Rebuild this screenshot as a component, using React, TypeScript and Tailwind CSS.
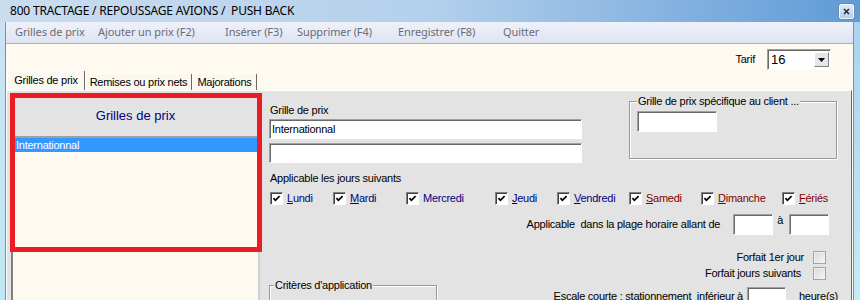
import * as React from "react";

function Check({ on = true }: { on?: boolean }) {
  return (
    <span className="flex h-[13px] w-[13px] shrink-0 items-center justify-center border border-t-[#808080] border-l-[#808080] border-r-white border-b-white bg-white shadow-[inset_1px_1px_0_#404040]">
      {on && (
        <svg width="9" height="9" viewBox="0 0 9 9">
          <path d="M1.4 4.2 3.4 6.3 7.6 2.1" fill="none" stroke="#000" strokeWidth="1.7" />
        </svg>
      )}
    </span>
  );
}

function FlatCheck() {
  return (
    <span className="h-[13px] w-[13px] shrink-0 border border-[#a3a3a3] bg-gradient-to-br from-[#d6d6d6] to-[#f7f7f7] shadow-[inset_1px_1px_0_#f2f2f2]" />
  );
}

function Field({ className = "", children }: { className?: string; children?: React.ReactNode }) {
  return (
    <div
      className={`flex items-center border border-t-[#a0a0a0] border-l-[#a0a0a0] border-r-white border-b-white bg-white pl-[2px] shadow-[inset_1px_1px_0_#696969] ${className}`}
    >
      {children}
    </div>
  );
}

const days = [
  { k: "L", rest: "undi", w: "w-[63px]", red: false },
  { k: "M", rest: "ardi", w: "w-[73px]", red: false },
  { k: "", rest: "Mercredi", w: "w-[89px]", red: false },
  { k: "J", rest: "eudi", w: "w-[62px]", red: false },
  { k: "V", rest: "endredi", w: "w-[72px]", red: false },
  { k: "S", rest: "amedi", w: "w-[72px]", red: true },
  { k: "D", rest: "imanche", w: "w-[81px]", red: true },
  { k: "F", rest: "ériés", w: "", red: true },
];

const menu = [
  { t: "Grilles de prix", w: "w-[83px]" },
  { t: "Ajouter un prix (F2)", w: "w-[127px]" },
  { t: "Insérer (F3)", w: "w-[72px]" },
  { t: "Supprimer (F4)", w: "w-[101px]" },
  { t: "Enregistrer (F8)", w: "w-[105px]" },
  { t: "Quitter", w: "" },
];

export default function App() {
  return (
    <div className="flex h-[300px] w-[860px] flex-col overflow-hidden bg-[#c3dff2] font-['Liberation_Sans',Arial,sans-serif] text-[11px] tracking-[-0.25px] text-black">
      {/* barre de titre */}
      <div className="flex h-[22px] shrink-0 items-center bg-gradient-to-r from-[#cadcef] via-[#b4d0ec] to-[#5f9bd6] pl-[10px] pr-[6px]">
        <span className="font-['Noto_Sans',sans-serif] text-[12px] tracking-[-0.2px] whitespace-pre">
          800 TRACTAGE / REPOUSSAGE AVIONS /  PUSH BACK
        </span>
        <span className="ml-auto mt-[1px] flex h-[15px] w-[15px] items-center justify-center rounded-[2px] border border-[#f4f8fc] bg-gradient-to-b from-[#dce9f5] to-[#b3cde8] shadow-[0_0_0_1px_#6c8db3]">
          <svg width="7" height="7" viewBox="0 0 7 7">
            <path d="M1 1 6 6M6 1 1 6" stroke="#1e2a3a" strokeWidth="1.5" />
          </svg>
        </span>
      </div>

      <div className="flex min-h-0 flex-1">
        <div className="w-[5px] bg-gradient-to-b from-[#cbe2f3] to-[#bde9f4]" />

        <div className="flex min-w-0 flex-1 flex-col border-x border-[#7f8fa3] bg-[#fefaef]">
          {/* menu */}
          <div className="flex h-[22px] shrink-0 items-center border-b border-[#a6b0c8] bg-gradient-to-b from-[#eef1f9] to-[#dfe4f2] pl-[9px] font-['Noto_Sans',sans-serif] text-[11px] tracking-[-0.1px] text-[#6a6c75]">
            {menu.map((m) => (
              <span key={m.t} className={`${m.w} whitespace-nowrap`}>
                {m.t}
              </span>
            ))}
          </div>

          {/* tarif */}
          <div className="mt-[5px] flex h-[21px] shrink-0 items-center justify-end pr-[22px]">
            <span className="mr-[12px]">Tarif</span>
            <Field className="h-[21px] w-[64px]">
              <span className="pl-[1px] text-[13px] tracking-normal">16</span>
              <span className="ml-auto mr-[1px] flex h-[15px] w-[15px] items-center justify-center border border-t-white border-l-white border-r-[#808080] border-b-[#808080] bg-[#e6e6e6]">
                <svg width="7" height="4" viewBox="0 0 7 4">
                  <path d="M0 0h7L3.5 4z" fill="#000" />
                </svg>
              </span>
            </Field>
          </div>

          {/* onglets */}
          <div className="flex h-[20px] shrink-0 items-end pl-[1px]">
            <div className="flex h-[20px] w-[78px] items-center justify-center rounded-tr-[2px] border-t border-l border-r border-t-white border-l-white border-r-[#696969] bg-[#fbf8f0]">
              Grilles de prix
            </div>
            <div className="flex h-[17px] w-[107px] items-center justify-center rounded-tr-[2px] border-t border-l border-r border-t-white border-l-white border-r-[#696969] bg-[#fbf8f0]">
              Remises ou prix nets
            </div>
            <div className="flex h-[17px] w-[65px] items-center justify-center rounded-tr-[2px] border-t border-l border-r border-t-white border-l-white border-r-[#696969] bg-[#fbf8f0]">
              Majorations
            </div>
          </div>

          {/* panneau */}
          <div className="relative mr-[1px] flex min-h-0 flex-1 items-start border-t border-l border-r border-t-white border-l-white border-r-[#696969] bg-[#e3e3e3]">
            {/* liste */}
            <div className="ml-[4px] mt-[4px] flex h-[260px] w-[249px] shrink-0 flex-col border-2 border-t-[#808080] border-l-[#808080] border-r-[#d0d0d0] border-b-[#d0d0d0] bg-[#fefaef]">
              <div className="flex h-[41px] items-center justify-center border-b-2 border-[#a0a0a0] bg-[#e3e3e3] pb-[2px] text-[13px] tracking-normal text-[#00007f]">
                Grilles de prix
              </div>
              <div className="flex h-[14px] items-center bg-[#3399ff] pl-[3px] text-white">Internationnal</div>
            </div>

            {/* cadre rouge */}
            <div className="pointer-events-none absolute left-[3px] top-[2px] h-[159px] w-[252px] border-[5px] border-[#ed1c24]" />

            {/* formulaire */}
            <div className="ml-[9px] flex min-w-0 flex-1 flex-col">
              <div className="flex items-start">
                <div className="mt-[13px] flex w-[313px] flex-col">
                  <span className="pl-[1px] leading-[13px]">Grille de prix</span>
                  <Field className="mt-[2px] h-[20px]">Internationnal</Field>
                  <Field className="mt-[4px] h-[20px]" />
                </div>
                <div className="ml-[47px] mt-[10px] flex h-[58px] w-[208px] flex-col border border-[#9a9a9a] shadow-[inset_1px_1px_0_#fff,1px_1px_0_#fff]">
                  <span className="-mt-[7px] ml-[7px] w-fit bg-[#e3e3e3] px-[1px] leading-[13px]">
                    Grille de prix spécifique au client ...
                  </span>
                  <Field className="ml-[7px] mt-[3px] h-[21px] w-[80px]" />
                </div>
              </div>

              <span className="mt-[9px] pl-[1px] leading-[13px]">Applicable les jours suivants</span>

              <div className="mt-[7px] flex h-[13px] items-center pl-[1px]">
                {days.map((d) => (
                  <div key={d.rest} className={`flex items-center gap-[4px] ${d.w}`}>
                    <Check />
                    <span className={`leading-[13px] ${d.red ? "text-[#800000]" : "text-[#000080]"}`}>
                      {d.k && <span className="underline underline-offset-[1px]">{d.k}</span>}
                      {d.rest}
                    </span>
                  </div>
                ))}
              </div>

              <div className="mt-[9px] flex items-start justify-end pr-[22px]">
                <span className="mr-[13px] mt-[4px] whitespace-pre leading-[13px]">
                  Applicable  dans la plage horaire allant de
                </span>
                <Field className="h-[21px] w-[40px]" />
                <span className="ml-[4px] mr-[6px] leading-[13px]">à</span>
                <Field className="h-[21px] w-[40px]" />
              </div>

              <div className="mt-[16px] flex h-[13px] items-center justify-end pr-[25px]">
                <span className="mr-[9px] leading-[13px]">Forfait 1er jour</span>
                <FlatCheck />
              </div>
              <div className="mt-[3px] flex h-[13px] items-center justify-end pr-[25px]">
                <span className="mr-[12px] leading-[13px]">Forfait jours suivants</span>
                <FlatCheck />
              </div>

              <div className="mt-[5px] flex items-start">
                <div className="flex h-[40px] w-[168px] flex-col border border-[#9a9a9a] shadow-[inset_1px_1px_0_#fff,1px_1px_0_#fff]">
                  <span className="-mt-[7px] ml-[4px] w-fit bg-[#e3e3e3] px-[1px] leading-[13px]">
                    Critères d'application
                  </span>
                </div>
                <div className="flex flex-1 items-start justify-end pr-[19px]">
                  <span className="mr-[4px] mt-[5px] whitespace-pre leading-[13px]">
                    Escale courte : stationnement  inférieur à
                  </span>
                  <Field className="mt-[2px] h-[21px] w-[39px]" />
                  <span className="mt-[5px] w-[46px] pl-[13px] leading-[13px]">heure(s)</span>
                </div>
              </div>
            </div>
          </div>
        </div>

        <div className="w-[6px] bg-gradient-to-b from-[#a9d3ef] to-[#c6ebf7]" />
      </div>
    </div>
  );
}
